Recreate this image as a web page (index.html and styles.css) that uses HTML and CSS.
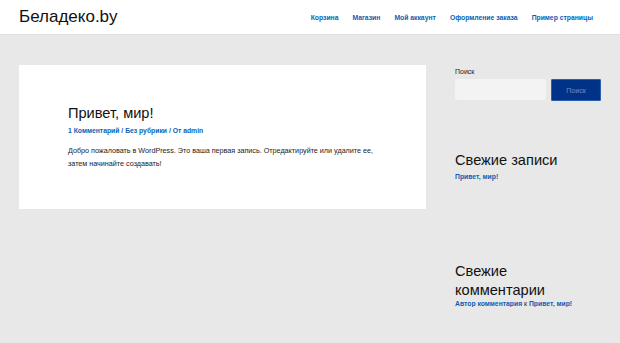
FILE: index.html
```html
<!DOCTYPE html>
<html lang="ru">
<head>
  <meta charset="UTF-8" />
  <meta name="viewport" content="width=device-width, initial-scale=1.0"/>
  <title>Беладеко.by</title>
  <link rel="stylesheet" href="styles.css">
</head>
<body>
  <header class="site-header">
    <a class="site-title" href="#">Беладеко.by</a>
    <nav class="main-nav">
      <a href="#">Корзина</a>
      <a href="#">Магазин</a>
      <a href="#">Мой аккаунт</a>
      <a href="#">Оформление заказа</a>
      <a href="#">Пример страницы</a>
    </nav>
  </header>

  <div class="site-content">
    <main class="content">
      <article class="post">
        <h2 class="post-title">Привет, мир!</h2>
        <div class="post-meta">
          <a href="#">1 Комментарий</a> / <a href="#">Без рубрики</a> / От <a href="#">admin</a>
        </div>
        <p class="post-text">Добро пожаловать в WordPress. Это ваша первая запись. Отредактируйте или удалите ее, затем начинайте создавать!</p>
      </article>
    </main>

    <aside class="sidebar">
      <div class="widget widget-search">
        <label for="s">Поиск</label>
        <div class="search-row">
          <input type="text" id="s">
          <button class="search-btn">Поиск</button>
        </div>
      </div>

      <div class="widget widget-recent">
        <h3 class="widget-title">Свежие записи</h3>
        <a href="#">Привет, мир!</a>
      </div>

      <div class="widget widget-comments">
        <h3 class="widget-title">Свежие комментарии</h3>
        <div><a href="#">Автор комментария</a> к <a href="#">Привет, мир!</a></div>
      </div>
    </aside>
  </div>
</body>
</html>
```

FILE: styles.css
```css
body {
  margin: 0;
  background: #e8e8e8;
  color: #222;
  font-family: "Liberation Sans", Arial, sans-serif;
}

a {
  color: #0a5fb4;
  text-decoration: none;
}

.site-header {
  background: #fff;
  height: 34px;
  border-bottom: 1px solid #dedede;
  display: flex;
  align-items: center;
  justify-content: space-between;
  padding: 0 27px 0 19px;
}

.site-title {
  color: #111;
  font-size: 17px;
}

.main-nav {
  display: flex;
  gap: 14px;
  font-size: 6.8px;
  font-weight: bold;
}

.main-nav a {
  color: #0a5fb4;
}

.site-content {
  display: flex;
  padding: 30px 19px 0 19px;
  gap: 29px;
}

.content {
  width: 407px;
}

.post {
  background: #fff;
  height: 144px;
  box-sizing: border-box;
  padding: 38px 40px 0 49px;
}

.post-title {
  margin: 0;
  font-size: 14.6px;
  font-weight: normal;
  color: #111;
  line-height: 20px;
}

.post-meta {
  font-size: 6.8px;
  font-weight: bold;
  color: #0a5fb4;
  margin-top: 4px;
}

.post-text {
  font-size: 7.2px;
  line-height: 13px;
  margin: 10px 0 0 0;
  color: #222;
}

.sidebar {
  width: 146px;
  display: flex;
  flex-direction: column;
}

.widget-search label {
  display: block;
  font-size: 7px;
  color: #222;
  margin-top: 3px;
  margin-bottom: 4px;
}

.search-row {
  display: flex;
  gap: 5px;
}

.search-row input {
  width: 91px;
  height: 21px;
  box-sizing: border-box;
  background: #f3f3f3;
  border: none;
  border-radius: 2px;
  padding: 0;
}

.search-btn {
  width: 50px;
  height: 22px;
  background: #003287;
  border: 1px solid #2a5fb0;
  border-radius: 1px;
  color: #6f8fc8;
  font-family: "Liberation Sans", Arial, sans-serif;
  font-size: 7px;
  padding: 0;
}

.widget-title {
  margin: 0;
  font-size: 14.6px;
  font-weight: normal;
  color: #111;
  line-height: 19px;
}

.widget-recent {
  margin-top: 50px;
  font-size: 6.8px;
  font-weight: bold;
}

.widget-recent .widget-title {
  margin-bottom: 3px;
}

.widget-comments {
  margin-top: 82px;
  font-size: 6.8px;
  font-weight: bold;
  color: #222;
}

.widget-comments > div {
  font-weight: normal;
}

.widget-comments a {
  font-weight: bold;
}
```
